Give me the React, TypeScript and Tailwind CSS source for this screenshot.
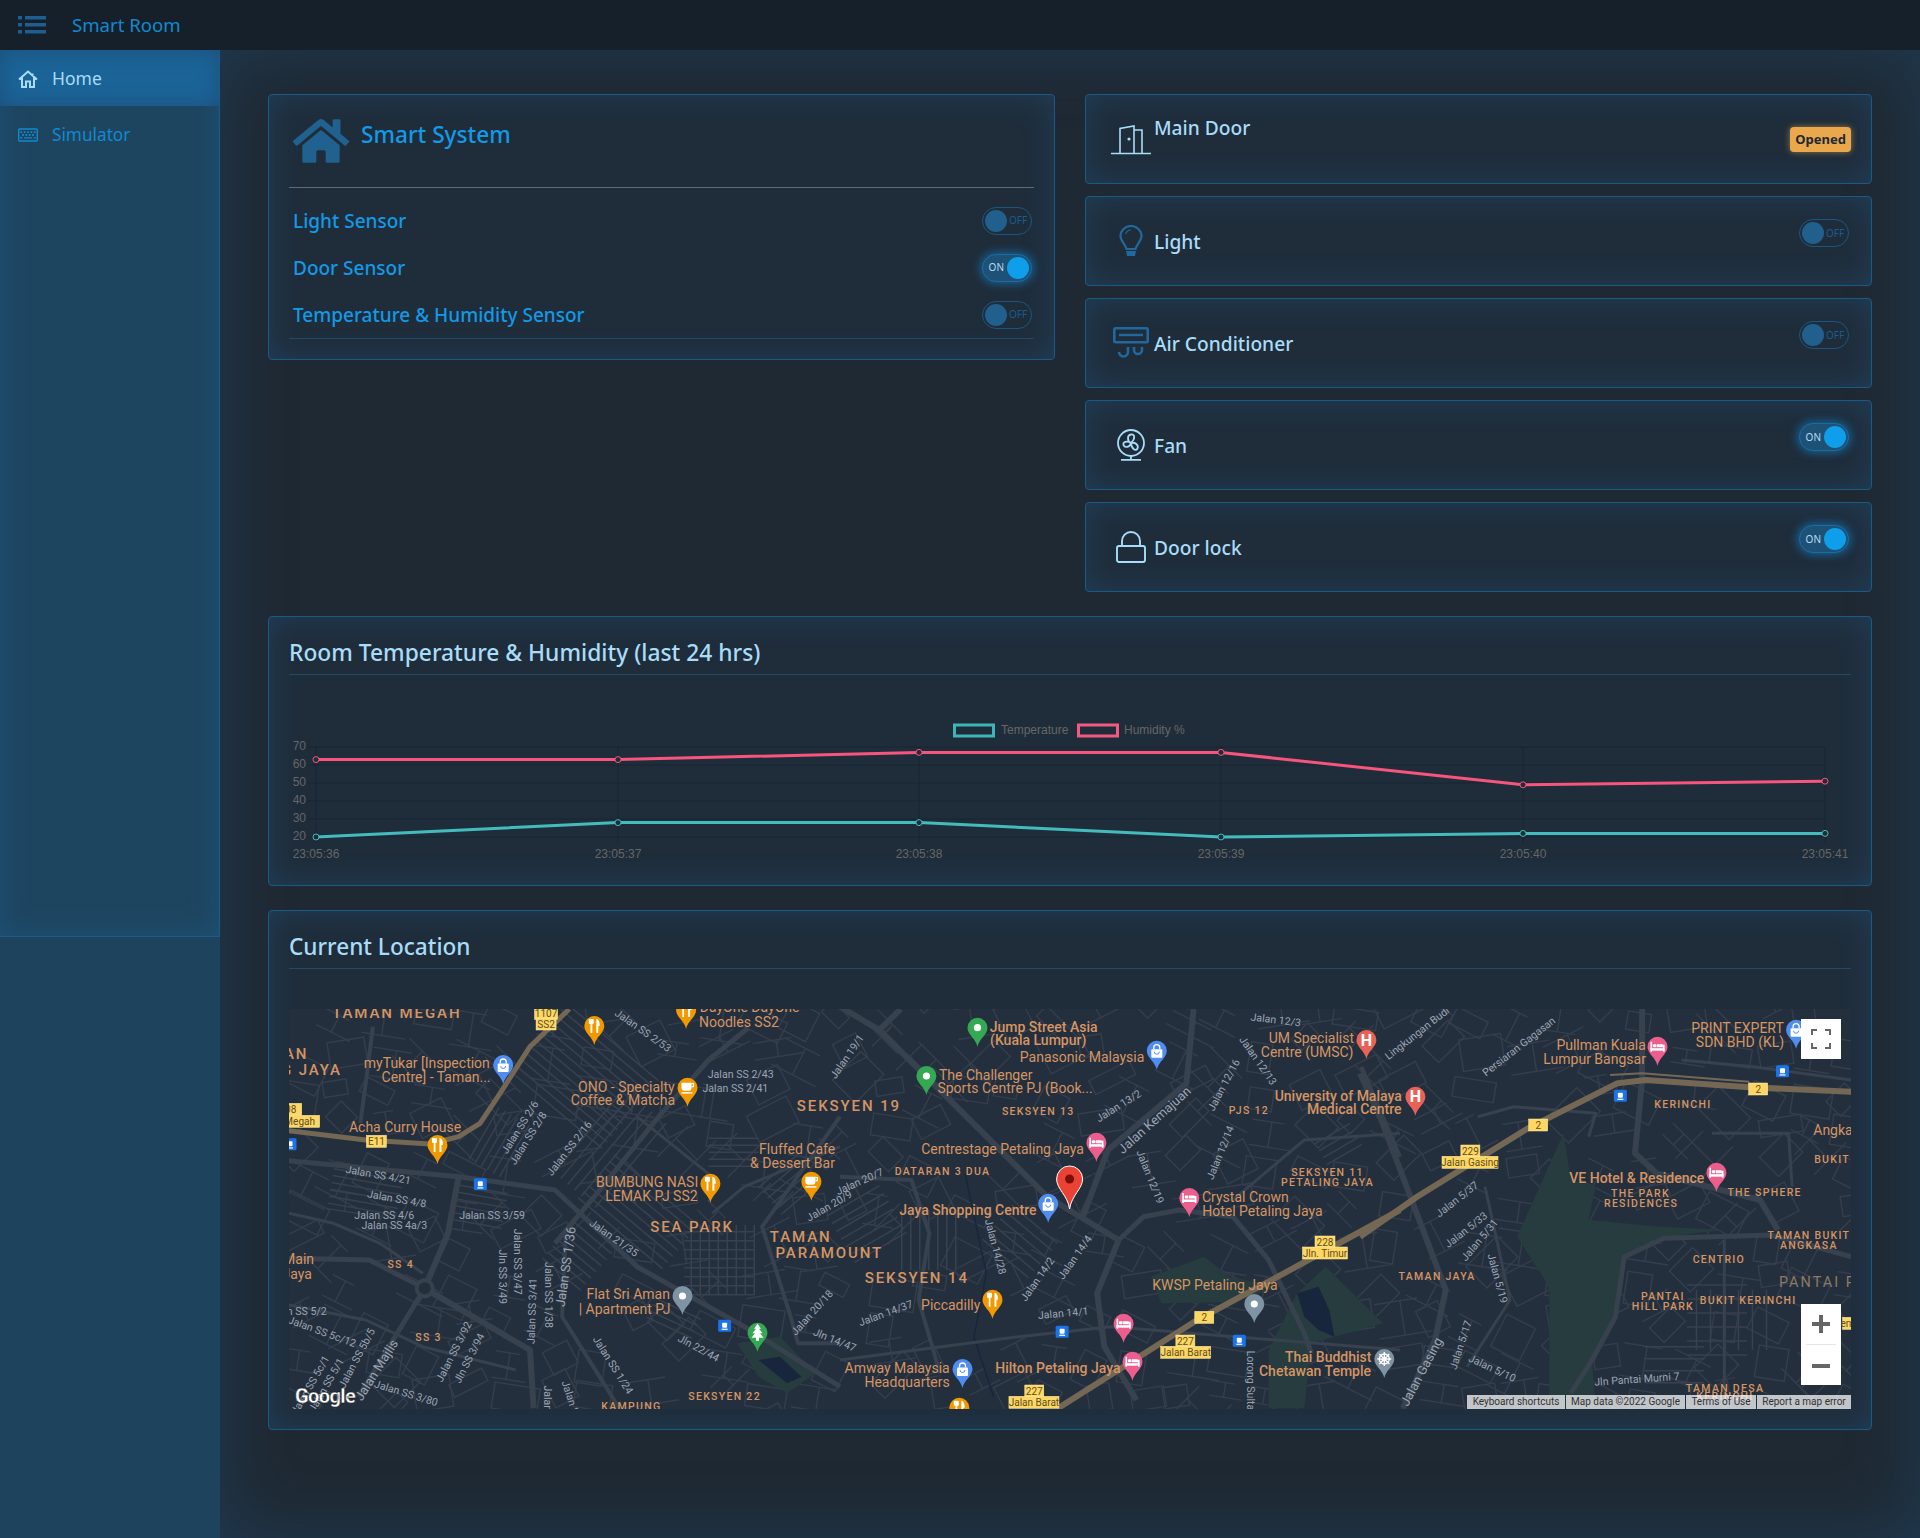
import React from 'react';
import { FaHome, FaRegKeyboard } from 'react-icons/fa';

const c6 = (x: number, y: number) => [x / 2.8 - 9, y / 3 - 9];
const c7 = (x: number, y: number) => [x / 2.8 + 551, y / 3 - 9];
const c8 = (x: number, y: number) => [x / 2.8 + 1071, y / 3 - 9];
type Crop = typeof c6;

const line = (crop: Crop, p: number[]) => {
  const out: string[] = [];
  for (let i = 0; i < p.length; i += 2) out.push(crop(p[i], p[i + 1]).map((n) => n.toFixed(1)).join(','));
  return out.join(' ');
};

// [crop, width, points]
const majorRoads: [Crop, number, number[]][] = [
  [c6, 5, [1310, 85, 1200, 180, 1060, 350, 880, 590, 770, 730]],
  [c6, 5, [0, 480, 500, 530, 770, 570, 1000, 800, 1300, 980, 1568, 1160]],
  [c6, 6, [500, 530, 470, 700, 405, 865, 700, 1050, 710, 1225]],
  [c6, 5, [25, 775, 250, 780, 405, 865, 220, 1190]],
  [c6, 4, [260, 80, 240, 250, 225, 370]],
  [c6, 4, [1568, 350, 1350, 680, 1430, 950, 1450, 1030, 1568, 1030]],
  [c6, 4, [800, 700, 790, 950, 950, 1225]],
  [c6, 3, [25, 640, 150, 670, 280, 730, 400, 820]],
  [c6, 3, [25, 915, 240, 960, 400, 1040, 660, 1110]],
  [c6, 3, [1568, 440, 1300, 560, 1210, 640]],
  [c6, 3, [1000, 350, 1210, 530]],
  [c7, 6, [0, 20, 110, 90, 580, 590, 780, 720]],
  [c7, 6, [110, 90, 170, 27]],
  [c7, 6, [990, 27, 970, 250, 750, 450, 680, 650]],
  [c7, 6, [780, 720, 720, 880, 740, 1040, 830, 1200]],
  [c7, 5, [780, 720, 850, 650, 950, 630, 1100, 650, 1200, 780, 1300, 1000, 1320, 1060]],
  [c7, 4, [0, 530, 200, 540, 250, 700, 220, 900, 280, 1120]],
  [c7, 3, [0, 1080, 500, 1010, 760, 980, 1568, 1050]],
  [c7, 3, [1568, 400, 1300, 420, 1100, 600]],
  [c7, 4, [1460, 200, 1568, 470]],
  [c8, 6, [0, 220, 60, 360, 240, 870, 210, 1020, 120, 1225]],
  [c8, 6, [790, 27, 790, 240, 770, 460, 830, 520, 1120, 600, 1170, 690]],
  [c8, 5, [1375, 770, 1150, 705, 850, 715, 740, 770, 715, 950, 650, 1080, 590, 1180]],
  [c8, 3, [1020, 720, 1020, 1225]],
  [c8, 3, [350, 560, 420, 900, 300, 1100]],
  [c8, 3, [985, 400, 1200, 400, 1210, 560]],
  [c8, 3, [900, 180, 1100, 200, 1375, 240]],
  [c8, 3, [330, 350, 430, 320, 660, 340, 640, 410]],
];

const hatches: [Crop, number, number, number, number, number, number][] = [
  [c6, 850, 230, 120, 90, 40, 8],
  [c6, 930, 450, 110, 60, -50, 9],
  [c6, 620, 430, 60, 40, -60, 7],
  [c6, 1000, 640, 110, 60, 40, 8],
  [c6, 240, 570, 70, 45, 10, 7],
  [c6, 560, 620, 50, 35, 10, 7],
  [c6, 1230, 780, 70, 70, 90, 9],
  [c6, 1230, 800, 70, 70, 0, 9],
  [c6, 830, 770, 50, 50, 40, 8],
  [c6, 1430, 560, 50, 40, -40, 7],
  [c6, 1100, 960, 50, 25, 25, 7],
  [c6, 1270, 460, 50, 30, 0, 7],
  [c7, 240, 720, 60, 60, 90, 9],
  [c7, 500, 730, 60, 50, 40, 9],
  [c7, 80, 680, 60, 60, -30, 9],
  [c7, 1400, 440, 40, 30, -30, 8],
  [c8, 1000, 960, 60, 70, 0, 14],
  [c8, 1040, 960, 60, 70, 90, 14],
  [c8, 880, 1100, 60, 40, 0, 12],
];

// [text, x, y, kind, rotation]
type L = [string, number, number, string, number?];
const labels6: L[] = [
  ['TAMAN MEGAH', 327, 40, 'b'], ['AN', 45, 162, 'b'], ['G JAYA', 88, 210, 'b'],
  ['myTukar [Inspection', 411, 190, 'p'], ['Centre] - Taman...', 437, 232, 'p'], ['Acha Curry House', 350, 380, 'p'],
  ['ONO - Specialty', 970, 260, 'p'], ['Coffee & Matcha', 960, 301, 'p'], ['DayOne DayOne', 1315, 22, 'p'], ['Noodles SS2', 1285, 67, 'p'],
  ['BUMBUNG NASI', 1028, 546, 'p'], ['LEMAK PJ SS2', 1040, 588, 'p'], ['Fluffed Cafe', 1448, 448, 'p'], ['& Dessert Bar', 1435, 490, 'p'],
  ['SEA PARK', 1154, 681, 'b'], ['Flat Sri Aman', 975, 883, 'p'], ['| Apartment PJ', 965, 926, 'p'], ['Main', 52, 778, 'p'], ['Jaya', 48, 822, 'p'],
  ['SS 4', 338, 792, 'a'], ['SS 3', 416, 1011, 'a'], ['SEKSYEN 22', 1245, 1188, 'a'], ['KAMPUNG', 984, 1218, 'a'],
  ['Jalan SS 2/53', 1016, 92, 'r', 35], ['Jalan SS 2/43', 1290, 224, 'r'], ['Jalan SS 2/41', 1275, 265, 'r'],
  ['Jalan SS 2/6', 672, 382, 'r', -58], ['Jalan SS 2/8', 695, 415, 'r', -58], ['Jalan SS 2/16', 810, 445, 'r', -52],
  ['Jalan SS 4/21', 275, 525, 'r', 10], ['Jalan SS 4/8', 327, 597, 'r', 10], ['Jalan SS 4/6', 292, 645, 'r'], ['Jalan SS 4a/3', 320, 677, 'r'],
  ['Jalan SS 3/59', 594, 646, 'r'], ['Jalan 21/35', 935, 714, 'r', 35], ['Jalan SS 3/47', 664, 785, 'r', 90], ['Jln SS 3/49', 622, 830, 'r', 90],
  ['Jalan SS 3/41', 706, 933, 'r', -88], ['Jalan SS 1/38', 752, 885, 'r', 90], ['Jalan SS 1/36', 800, 800, 'm', -82],
  ['Jalan 20/18', 1490, 938, 'r', -48], ['Jln 22/44', 1172, 1045, 'r', 28], ['n SS 5/2', 75, 934, 'r'], ['Jalan SS 5c/12', 118, 995, 'r', 20],
  ['Jalan SS 5b/5', 215, 1075, 'r', -62], ['Jalan SS 5c/1', 85, 1155, 'r', -60], ['Jalan SS 5/1', 130, 1155, 'r', -60], ['Jalan Majlis', 270, 1110, 'm', -58],
  ['Jalan SS 3/92', 487, 1055, 'r', -63], ['Jln SS 3/94', 530, 1075, 'r', -63], ['Jalan SS 3/80', 353, 1180, 'r', 17], ['Jalan SS 1/24', 932, 1095, 'r', 58],
  ['Jalan', 748, 1195, 'r', 90], ['Jalan Ss', 815, 1200, 'r', 72],
];
const labels7: L[] = [
  ['SEKSYEN 19', 25, 318, 'b'], ['TAMAN', -110, 711, 'b'], ['PARAMOUNT', -30, 759, 'b'], ['SEKSYEN 14', 215, 834, 'b'],
  ['Jump Street Asia', 570, 80, 'q'], ['(Kuala Lumpur)', 555, 121, 'q'], ['Panasonic Malaysia', 678, 170, 'p'], ['The Challenger', 408, 224, 'p'], ['Sports Centre PJ (Book...', 490, 265, 'p'],
  ['SEKSYEN 13', 555, 333, 'a'], ['Jalan 13/2', 780, 318, 'r', -32], ['Jalan Kemajuan', 880, 360, 'm', -42], ['Jalan 12/3', 1220, 60, 'r', 7],
  ['Jalan 12/16', 1075, 255, 'r', -62], ['Jalan 12/13', 1170, 182, 'r', 55], ['Jalan 12/14', 1065, 458, 'r', -68], ['Jalan 12/19', 868, 530, 'r', 68],
  ['UM Specialist', 1320, 115, 'p'], ['Centre (UMSC)', 1308, 157, 'p'], ['University of Malaya', 1395, 287, 'q'], ['Medical Centre', 1440, 328, 'q'], ['PJS 12', 1145, 330, 'a'],
  ['Centrestage Petaling Jaya', 455, 446, 'p'], ['DATARAN 3 DUA', 287, 514, 'a'], ['Jaya Shopping Centre', 358, 629, 'q'], ['Jalan 14/28', 435, 740, 'r', 75],
  ['Jalan 14/2', 553, 838, 'r', -55], ['Jalan 14/4', 658, 772, 'r', -55], ['Jalan 14/37', 128, 940, 'r', -20], ['Jalan 14/1', 625, 940, 'r', -5], ['Piccadilly', 310, 916, 'p'],
  ['Crystal Crown', 1135, 590, 'p'], ['Hotel Petaling Jaya', 1183, 632, 'p'], ['SEKSYEN 11', 1365, 516, 'a'], ['PETALING JAYA', 1365, 546, 'a'], ['KWSP Petaling Jaya', 1050, 856, 'p'],
  ['Amway Malaysia', 160, 1103, 'p'], ['Headquarters', 188, 1145, 'p'], ['Hilton Petaling Jaya', 610, 1103, 'q'], ['Thai Buddhist', 1367, 1072, 'q'], ['Chetawan Temple', 1330, 1114, 'q'],
  ['Lorong Sultan', 1150, 1150, 'r', 90], ['Jalan 20/7', 55, 545, 'r', -24], ['Jalan 20/9', -30, 618, 'r', -30], ['Jalan 19/1', 20, 170, 'r', -55], ['Jln 14/47', -15, 1020, 'r', 22],
];
const labels8: L[] = [
  ['Lingkungan Budi', 160, 100, 'r', -38], ['Persiaran Gagasan', 445, 140, 'r', -38], ['Pullman Kuala', 675, 136, 'p'], ['Lumpur Bangsar', 657, 178, 'p'],
  ['PRINT EXPERT', 1057, 85, 'p'], ['SDN BHD (KL)', 1064, 127, 'p'], ['KERINCHI', 904, 312, 'a'], ['Angkasa', 1345, 391, 'p'], ['BUKIT', 1322, 477, 'a'],
  ['VE Hotel & Residence', 775, 535, 'q'], ['THE PARK', 785, 579, 'a'], ['RESIDENCES', 787, 609, 'a'], ['THE SPHERE', 1133, 576, 'a'], ['TAMAN BUKIT', 1257, 705, 'a'], ['ANGKASA', 1257, 735, 'a'],
  ['CENTRIO', 1005, 777, 'a'], ['PANTAI', 848, 888, 'a'], ['HILL PARK', 848, 918, 'a'], ['BUKIT KERINCHI', 1087, 900, 'a'], ['TAMAN JAYA', 216, 828, 'a'],
  ['Jalan 5/37', 272, 598, 'r', -38], ['Jalan 5/33', 297, 690, 'r', -38], ['Jalan 5/31', 335, 720, 'r', -50], ['Jalan 5/19', 385, 835, 'r', 75], ['Jalan 5/17', 282, 1035, 'r', -72],
  ['Jalan 5/10', 370, 1105, 'r', 25], ['Jalan Gasing', 172, 1115, 'm', -62], ['Jln Pantai Murni 7', 775, 1138, 'r', -4], ['TAMAN DESA', 1022, 1164, 'a'], ['KERINCHI', 1022, 1190, 'a'], ['PANTAI P', 1282, 847, 'd'],
];

const labelStyle: Record<string, { size: number; fill: string; ls?: number; weight?: number }> = {
  p: { size: 14, fill: '#d59563' },
  q: { size: 14, fill: '#d59563', weight: 500 },
  a: { size: 10.5, fill: '#d59563', ls: 1.3, weight: 500 },
  b: { size: 15, fill: '#d59563', ls: 1.9, weight: 500 },
  d: { size: 14.5, fill: '#8f7a62', ls: 2, weight: 400 },
  r: { size: 10.6, fill: '#9ca5b3' },
  m: { size: 13, fill: '#9ca5b3' },
};

// [glyph, color, x, y] y is the tip of the pin
const pins: [Crop, string, string, number, number][] = [
  [c6, 'bag', '#4f8ef0', 625, 252], [c6, 'food', '#f29900', 880, 135], [c6, 'food', '#f29900', 1137, 87], [c6, 'cup', '#f29900', 1141, 320],
  [c6, 'food', '#f29900', 441, 492], [c6, 'food', '#f29900', 1205, 608], [c6, 'cup', '#f29900', 1488, 602], [c6, 'dot', '#7e93a3', 1127, 945], [c6, 'tree', '#34a853', 1337, 1055],
  [c7, 'dot', '#34a853', 385, 140], [c7, 'dot', '#34a853', 242, 285], [c7, 'bag', '#4f8ef0', 887, 209], [c7, 'h', '#ea6158', 1474, 177], [c7, 'bed', '#ec5f8c', 718, 485],
  [c7, 'bed', '#ec5f8c', 978, 651], [c7, 'bag', '#4f8ef0', 583, 668], [c7, 'food', '#f29900', 427, 956], [c7, 'bed', '#ec5f8c', 794, 1028], [c7, 'bed', '#ec5f8c', 819, 1142],
  [c7, 'dot', '#7e93a3', 1160, 969], [c7, 'wheel', '#7e93a3', 1524, 1134], [c7, 'bag', '#4f8ef0', 343, 1164], [c7, 'food', '#f29900', 334, 1280],
  [c8, 'h', '#ea6158', 155, 347], [c8, 'bed', '#ec5f8c', 833, 197], [c8, 'bag', '#4f8ef0', 1221, 146], [c8, 'bed', '#ec5f8c', 998, 575],
];

const transit: [Crop, number, number][] = [
  [c6, 28, 433], [c6, 561, 553], [c6, 1245, 977], [c7, 622, 995], [c7, 1118, 1022], [c8, 729, 287], [c8, 1183, 214],
];

// [text, x, y, width]
const shields: [Crop, string, number, number, number][] = [
  [c6, '1107', 745, 40, 23], [c6, 'SS2', 745, 72, 20], [c6, 'E11', 270, 424, 20], [c6, '08', 30, 328, 22], [c6, 'Megah', 55, 364, 40],
  [c7, '228', 1358, 726, 20], [c7, 'Jln. Timur', 1358, 759, 45], [c7, '2', 1020, 952, 19], [c7, '227', 967, 1023, 19], [c7, 'Jalan Barat', 968, 1057, 50],
  [c7, '227', 544, 1173, 19], [c7, 'Jalan Barat', 543, 1207, 50], [c8, '229', 309, 453, 19], [c8, 'Jalan Gasing', 308, 487, 56], [c8, '2', 499, 375, 19], [c8, '2', 1115, 267, 19], [c8, 'em', 1365, 970, 10],
];

function Glyph({ kind }: { kind: string }) {
  if (kind === 'dot') return <circle cx="0" cy="-19" r="3.6" fill="#fff" />;
  if (kind === 'h')
    return (
      <text x="0" y="-13.5" textAnchor="middle" fontSize="16" fontWeight="700" fill="#fff">
        H
      </text>
    );
  if (kind === 'bag')
    return (
      <g>
        <rect x="-5.5" y="-20.5" width="11" height="8.5" rx="1" fill="#fff" />
        <path d="M-3 -20.5 v-1.5 a3 3 0 0 1 6 0 v1.5" fill="none" stroke="#fff" strokeWidth="1.3" />
        <path d="M-2.5 -18 a2.5 2.5 0 0 0 5 0" fill="none" stroke="#4f8ef0" strokeWidth="1" />
      </g>
    );
  if (kind === 'food')
    return (
      <g fill="#fff">
        <rect x="-5.5" y="-26" width="5" height="5" rx="1" />
        <rect x="-3.8" y="-22" width="1.8" height="10" />
        <path d="M2 -26 c3 0 3.4 4 3.4 7 h-1.4 v7 h-2z" />
      </g>
    );
  if (kind === 'cup')
    return (
      <g>
        <path d="M-6 -24 h10 v5 a3 3 0 0 1 -3 3 h-4 a3 3 0 0 1 -3 -3z" fill="#fff" />
        <path d="M4 -23 h2 v3 h-2" fill="none" stroke="#fff" strokeWidth="1.2" />
        <rect x="-6" y="-14.5" width="11" height="1.4" fill="#fff" />
      </g>
    );
  if (kind === 'bed')
    return (
      <g fill="#fff">
        <rect x="-7" y="-24" width="1.6" height="10" />
        <rect x="5.5" y="-21" width="1.6" height="7" />
        <rect x="-7" y="-17.5" width="14" height="2.5" />
        <rect x="-4.6" y="-21.5" width="3.6" height="3" rx="1" />
        <path d="M-.5 -21.5 h5 a1.5 1.5 0 0 1 1.5 1.5 v1.5 h-6.5z" />
      </g>
    );
  if (kind === 'tree') return <path d="M0 -28 l3.5 5 h-2 l3.5 4.5 h-2.5 l3.5 4.5 h-4.5 v3 h-3 v-3 h-4.5 l3.5 -4.5 h-2.5 l3.5 -4.5 h-2z" fill="#fff" />;
  if (kind === 'wheel')
    return (
      <g fill="none" stroke="#fff" strokeWidth="1.3">
        <circle cx="0" cy="-19" r="5" />
        <circle cx="0" cy="-19" r="1.5" fill="#fff" />
        <path d="M0 -26 v14 M-7 -19 h14 M-5 -24 l10 10 M5 -24 l-10 10" />
      </g>
    );
  return null;
}

// irregular blocks of minor streets, seeded so each run draws the same map
function minorStreets() {
  let seed = 7;
  const rnd = () => {
    seed = (seed * 16807) % 2147483647;
    return seed / 2147483647;
  };
  const out: React.ReactNode[] = [];
  for (let y = -10; y < 410; y += 38) {
    for (let x = -10; x < 1580; x += 42) {
      if (rnd() < 0.12) continue;
      const w = 20 + rnd() * 26;
      const h = 14 + rnd() * 22;
      const rot = Math.round(rnd() * 5) * 18 - 45;
      const d = rnd() < 0.5 ? `M0 0 H${w} V${h} H0 Z` : `M0 0 H${w} M${w * 0.6} 0 V${h} M0 ${h} H${w + 10}`;
      out.push(<path key={x + '-' + y} d={d} transform={`translate(${x + rnd() * 12} ${y + rnd() * 12}) rotate(${rot})`} fill="none" stroke="#343e4c" strokeWidth="1.4" />);
    }
  }
  return out;
}

function MapView() {
  return (
    <svg viewBox="0 0 1562 400" className="block w-full h-full font-['Roboto',sans-serif]">
      <rect width="1562" height="400" fill="#242f3e" />
      <g>{minorStreets()}</g>
      {hatches.map(([crop, x, y, w, h, rot, step], i) => {
        const [cx, cy] = crop(x, y);
        const rows = [];
        for (let n = -h / 2; n <= h / 2; n += step) rows.push(<line key={n} x1={-w / 2} x2={w / 2} y1={n} y2={n} />);
        return (
          <g key={i} transform={`translate(${cx} ${cy}) rotate(${rot})`} stroke="#38414e" strokeWidth="1.5">
            {rows}
          </g>
        );
      })}
      <polygon points={line(c8, [570, 400, 440, 710, 530, 860, 530, 1225, 660, 1225, 650, 1080, 715, 950, 740, 770, 860, 710, 1020, 690, 840, 680, 640, 660, 660, 560, 590, 540])} fill="#263c3f" />
      <polygon points={line(c7, [870, 830, 1020, 770, 1090, 830, 1230, 860, 1100, 905, 900, 910])} fill="#263c3f" />
      <polygon points={line(c7, [1280, 880, 1360, 800, 1520, 970, 1320, 1030, 1300, 1225, 1200, 1225, 1200, 1050])} fill="#263c3f" />
      <polygon points={line(c7, [1280, 880, 1340, 860, 1370, 930, 1385, 1010, 1340, 990, 1300, 950])} fill="#17263c" />
      <polygon points={line(c6, [1280, 1030, 1400, 1010, 1500, 1120, 1420, 1180, 1340, 1130])} fill="#263c3f" />
      <polygon points={line(c6, [1340, 1080, 1400, 1070, 1460, 1130, 1420, 1150])} fill="#17263c" />
      <polyline points={line(c7, [350, 520, 410, 820, 375, 1010, 430, 1190])} fill="none" stroke="#17263c" strokeWidth="1.5" />
      {majorRoads.map(([crop, w, p], i) => (
        <polyline key={i} points={line(crop, p)} fill="none" stroke="#38414e" strokeWidth={w} strokeLinejoin="round" />
      ))}
      <circle cx={c6(405, 865)[0]} cy={c6(405, 865)[1]} r="10" fill="#38414e" />
      <circle cx={c6(405, 865)[0]} cy={c6(405, 865)[1]} r="6" fill="#242f3e" />
      <polyline points={line(c6, [25, 392, 240, 420, 420, 432, 500, 410, 560, 370, 610, 290, 700, 140, 810, 27])} fill="none" stroke="#746855" strokeWidth="5" />
      <polyline points={line(c7, [610, 1225, 1000, 960, 1200, 845, 1568, 630])} fill="none" stroke="#746855" strokeWidth="6" />
      <polyline points={line(c8, [0, 710, 160, 590, 470, 385, 720, 250, 800, 240, 1090, 262, 1375, 275])} fill="none" stroke="#746855" strokeWidth="6" />
      <polyline points={line(c8, [700, 225, 790, 220, 1090, 245])} fill="none" stroke="#746855" strokeWidth="2" />
      {shields.map(([crop, text, x, y, w], i) => {
        const [cx, cy] = crop(x, y);
        return (
          <g key={i}>
            <rect x={cx - w / 2} y={cy - 6} width={w} height="12" fill="#fdd663" stroke="#fff3b0" strokeWidth="0.5" />
            <text x={cx} y={cy + 3.5} textAnchor="middle" fontSize="10" fill="#5f4f1e">
              {text}
            </text>
          </g>
        );
      })}
      {[[c6, labels6], [c7, labels7], [c8, labels8]].map(([crop, list], g) =>
        (list as L[]).map(([text, x, y, kind, rot], i) => {
          const [cx, cy] = (crop as Crop)(x, y);
          const s = labelStyle[kind];
          return (
            <text
              key={g + '-' + i}
              transform={`translate(${cx.toFixed(1)} ${cy.toFixed(1)}) rotate(${rot ?? 0})`}
              textAnchor="middle"
              dominantBaseline="central"
              fontSize={s.size}
              letterSpacing={s.ls}
              fontWeight={s.weight}
              fill={s.fill}
            >
              {text}
            </text>
          );
        }),
      )}
      {transit.map(([crop, x, y], i) => {
        const [cx, cy] = crop(x, y);
        return (
          <g key={i} transform={`translate(${cx} ${cy})`}>
            <rect x="-6.5" y="-6" width="13" height="12" rx="1.5" fill="#1a73e8" />
            <rect x="-2.5" y="-3" width="5" height="5" rx="0.8" fill="#fff" />
            <rect x="-3" y="3" width="6" height="1.2" fill="#fff" />
          </g>
        );
      })}
      {pins.map(([crop, glyph, color, x, y], i) => {
        const [cx, cy] = crop(x, y);
        return (
          <g key={i} transform={`translate(${cx.toFixed(1)} ${cy.toFixed(1)})`}>
            <path d="M0 0 C-1.5 -8 -10 -12 -10 -19 A10 10 0 1 1 10 -19 C10 -12 1.5 -8 0 0Z" fill={color} />
            <Glyph kind={glyph} />
          </g>
        );
      })}
      <g transform={`translate(${c7(643, 627).map((n) => n.toFixed(1)).join(' ')})`}>
        <path d="M0 0 C-2 -14 -13 -20 -13 -30 A13 13 0 1 1 13 -30 C13 -20 2 -14 0 0Z" fill="#ea4335" stroke="#fff" strokeWidth="1" />
        <circle cx="0" cy="-30" r="4.5" fill="#7a0f0a" />
      </g>
      <text x="6" y="394" fontSize="20" fontWeight="700" fill="#fff" stroke="#000" strokeWidth="0.3" letterSpacing="-0.6">
        Google
      </text>
    </svg>
  );
}

function Toggle({ on }: { on?: boolean }) {
  return on ? (
    <div className="flex items-center justify-end w-[50px] h-[28px] rounded-full border-[1.5px] border-[#1b6ba5] bg-[#1e5176] pr-[2px] shadow-[0_0_9px_2px_rgba(14,140,220,0.55)]">
      <span className="mr-[3px] text-[10px] text-[#b5dcf3] font-['Noto_Sans',sans-serif]">ON</span>
      <span className="w-[22px] h-[22px] rounded-full bg-[#0f9eea]" />
    </div>
  ) : (
    <div className="flex items-center w-[50px] h-[28px] rounded-full border-[1.5px] border-[#1c5580] pl-[2px]">
      <span className="w-[22px] h-[22px] rounded-full bg-[#215f8d]" />
      <span className="ml-[2px] text-[10px] text-[#1c5b8c] font-['Noto_Sans',sans-serif]">OFF</span>
    </div>
  );
}

function Card({ className, children }: { className?: string; children: React.ReactNode }) {
  return (
    <div className={`rounded-[4px] border border-[#1b5a85] bg-[#1f2d3b] shadow-[inset_0_0_30px_rgba(34,100,150,0.32)] ${className ?? ''}`}>
      {children}
    </div>
  );
}

function DoorIcon() {
  return (
    <svg width="40" height="32" viewBox="0 0 40 32" fill="none" stroke="#a8dcf8" strokeWidth="1.6">
      <path d="M0 30.5 h40 M9 30.5 V5.5 L23 3 V30.5 M23 7 h8 v23.5" />
      <circle cx="18" cy="16" r="1.6" fill="#a8dcf8" stroke="none" />
    </svg>
  );
}
function BulbIcon() {
  return (
    <svg width="24" height="32" viewBox="0 0 24 32" fill="none" stroke="#21689c" strokeWidth="2.2">
      <path d="M7.5 24 C6.5 19 1.5 16 1.5 11 A10.5 10 0 0 1 22.5 11 C22.5 16 17.5 19 16.5 24z" />
      <path d="M6.5 9 A6 6 0 0 1 12 5" strokeWidth="1.2" />
      <path d="M7 26 h10 l-1 5 h-8z" fill="#21689c" stroke="none" />
    </svg>
  );
}
function AcIcon() {
  return (
    <svg width="36" height="32" viewBox="0 0 36 32" fill="none" stroke="#21689c" strokeWidth="2.6">
      <rect x="1.3" y="1.3" width="33.4" height="14" rx="1.2" />
      <path d="M6 8 h24" strokeWidth="2.4" />
      <path d="M15 20 v5 a4.5 4.5 0 1 1 -9 0 M21 20 v3 a4 4 0 0 0 8 0 v-3" />
    </svg>
  );
}
function FanIcon() {
  return (
    <svg width="30" height="32" viewBox="0 0 30 32" fill="none" stroke="#a8dcf8" strokeWidth="1.8">
      <circle cx="15" cy="14" r="13" />
      <path d="M15 14 c-4 -2 -4 -8 0 -8.5 c4 -.5 4.5 4 0 8.5z M15 14 c4 -1 8 2 6.5 5.5 c-1.500 3 -6 1 -6.5 -5.500z M15 14 c-1 4.500 -6.500 5 -7.500 2 c-1 -3 3.500 -4.500 7.500 -2z" />
      <path d="M15 27 v3.500 M5 30.800 h20" />
    </svg>
  );
}
function LockIcon() {
  return (
    <svg width="30" height="32" viewBox="0 0 30 32" fill="none" stroke="#a8dcf8" strokeWidth="1.9">
      <rect x="1" y="15" width="28" height="16" rx="2" />
      <path d="M6 15 V10 a9 9 0 0 1 18 0 V15" />
    </svg>
  );
}

const devices = [
  { name: 'Light', icon: <BulbIcon />, on: false },
  { name: 'Air Conditioner', icon: <AcIcon />, on: false },
  { name: 'Fan', icon: <FanIcon />, on: true },
  { name: 'Door lock', icon: <LockIcon />, on: true },
];
const sensors = [
  { name: 'Light Sensor', on: false },
  { name: 'Door Sensor', on: true },
  { name: 'Temperature & Humidity Sensor', on: false },
];

const xs = [27, 329, 630, 932, 1234, 1536];
const yFor = (v: number) => 137 - (v - 20) * 1.8;
const temp = [20, 28, 28, 20, 22, 22];
const humid = [63, 63, 67, 67, 49, 51];
const times = ['23:05:36', '23:05:37', '23:05:38', '23:05:39', '23:05:40', '23:05:41'];

function Chart() {
  return (
    <svg viewBox="0 0 1562 170" className="block w-full h-[170px] font-['Liberation_Sans',sans-serif]">
      <rect x="665.500" y="25" width="39" height="11" fill="none" stroke="#3fb5b5" strokeWidth="3" />
      <text x="712" y="34" fontSize="12" fill="#666">Temperature</text>
      <rect x="789.500" y="25" width="39" height="11" fill="none" stroke="#f25a80" strokeWidth="3" />
      <text x="835" y="34" fontSize="12" fill="#666">Humidity %</text>
      {[70, 60, 50, 40, 30, 20].map((v) => (
        <g key={v}>
          <line x1="18" x2="1536" y1={yFor(v)} y2={yFor(v)} stroke="#182430" />
          <text x="17" y={yFor(v) + 3} fontSize="12" fill="#666" textAnchor="end">{v}</text>
        </g>
      ))}
      {xs.map((x, i) => (
        <g key={x}>
          <line x1={x} x2={x} y1="47" y2="143" stroke="#182430" />
          <text x={x} y="158" fontSize="12" fill="#666" textAnchor="middle">{times[i]}</text>
        </g>
      ))}
      {[
        { data: temp, color: '#45bcbc' },
        { data: humid, color: '#f7557d' },
      ].map(({ data, color }) => (
        <g key={color}>
          <polyline points={data.map((v, i) => `${xs[i]},${yFor(v)}`).join(' ')} fill="none" stroke={color} strokeWidth="3" />
          {data.map((v, i) => (
            <circle key={i} cx={xs[i]} cy={yFor(v)} r="3" fill="#1f2d3b" stroke={color} />
          ))}
        </g>
      ))}
    </svg>
  );
}

export default function App() {
  return (
    <div className="min-h-[1538px] bg-[#1d435d] font-['Noto_Sans',sans-serif]">
      <header className="flex items-center h-[50px] pl-[18px] bg-[#16202a] shadow-[0_1px_4px_rgba(0,0,0,0.4)]">
        <svg width="28" height="18" viewBox="0 0 28 18" fill="#1d5f91">
          <rect y="0" width="4" height="3.500" />
          <rect y="7" width="4" height="3.500" />
          <rect y="14" width="4" height="3.500" />
          <rect x="7" y="0" width="21" height="3.500" />
          <rect x="7" y="7" width="21" height="3.500" />
          <rect x="7" y="14" width="21" height="3.500" />
        </svg>
        <span className="ml-[26px] text-[18.6px] text-[#1289cf]">Smart Room</span>
      </header>
      <div className="flex min-h-[1488px]">
        <aside className="w-[220px] h-[887px] shrink-0 bg-[#1e4560] border-r border-b border-[#1e5c88] shadow-[inset_0_0_30px_rgba(30,110,170,0.3)]">
          <div className="flex items-center h-[56px] pl-[18px] pt-[1px] bg-[#1b6498] shadow-[inset_0_0_20px_rgba(30,60,90,0.5)] text-[#a8dcf8]">
            <svg width="20" height="18" viewBox="0 0 20 18" fill="none" stroke="#a8dcf8" strokeWidth="2">
              <path d="M1 9.500 L10 1.500 L19 9.500 M4 7.500 V17 H8 V11.500 H12 V17 H16 V7.500 M14.500 3.500 V6" />
            </svg>
            <span className="ml-[14px] text-[17.5px]">Home</span>
          </div>
          <div className="flex items-center h-[56px] pl-[18px] pt-[1px] text-[#1289cf]">
            <FaRegKeyboard className="w-[20px] h-[20px]" />
            <span className="ml-[14px] text-[17.2px]">Simulator</span>
          </div>
        </aside>
        <main className="flex-1 bg-[#1f2933] px-[48px] pt-[44px] shadow-[inset_0_0_70px_rgba(30,80,120,0.45)]">
          <div className="grid grid-cols-2 gap-x-[30px] mb-[24px]">
            <div>
              <Card className="h-[266px] px-[20px]">
                <div className="flex items-center h-[93px] border-b border-[#5f6b76] pl-[4px]">
                  <FaHome className="w-[56px] h-[50px] text-[#21618f]" />
                  <span className="ml-[12px] -mt-[12px] text-[22.7px] font-medium text-[#1399e6]">Smart System</span>
                </div>
                <div className="pt-[9px]">
                  {sensors.map((s, i) => (
                    <div key={s.name} className={`flex items-center justify-between pl-[4px] pr-[2px] ${i === 2 ? 'h-[48px] border-b border-[#1f4a69]' : 'h-[47px]'}`}>
                      <span className="mt-[2px] text-[19px] font-medium text-[#1399e6]">{s.name}</span>
                      <Toggle on={s.on} />
                    </div>
                  ))}
                </div>
              </Card>
            </div>
            <div className="flex flex-col gap-[12px]">
              <Card className="flex items-center justify-between h-[90px] pl-[25px] pr-[20px]">
                <div className="flex items-start">
                  <DoorIcon />
                  <span className="ml-[3px] -mt-[9px] text-[19.2px] font-medium text-[#a8dcf8]">Main Door</span>
                </div>
                <span className="mt-[1px] rounded-[4px] bg-[#e9a84c] px-[5px] py-[3px] text-[13px] font-bold text-[#1f2933] shadow-[0_0_6px_rgba(233,168,76,0.6)]">
                  Opened
                </span>
              </Card>
              {devices.map((d) => (
                <Card key={d.name} className="flex justify-between h-[90px] pl-[25px] pr-[22px]">
                  <div className="flex items-center">
                    <div className="flex justify-center w-[40px]">{d.icon}</div>
                    <span className="ml-[3px] mt-[2px] text-[19.2px] font-medium text-[#a8dcf8]">{d.name}</span>
                  </div>
                  <div className="pt-[22px]">
                    <Toggle on={d.on} />
                  </div>
                </Card>
              ))}
            </div>
          </div>
          <Card className="h-[270px] px-[20px] mb-[24px]">
            <div className="flex items-center h-[58px] pt-[16px] border-b border-[#1f4a69] text-[22.8px] font-medium text-[#a8dcf8]">
              Room Temperature &amp; Humidity (last 24 hrs)
            </div>
            <div className="pt-[25px]">
              <Chart />
            </div>
          </Card>
          <Card className="h-[520px] px-[20px]">
            <div className="flex items-center h-[58px] pt-[14px] border-b border-[#1f4a69] text-[22.6px] font-medium text-[#a8dcf8]">Current Location</div>
            <div className="relative mt-[40px] h-[400px] overflow-hidden">
              <MapView />
              <div className="absolute top-[10px] right-[10px] flex items-center justify-center w-[40px] h-[40px] bg-white">
                <svg width="20" height="20" viewBox="0 0 20 20" fill="none" stroke="#666" strokeWidth="2">
                  <path d="M1 6 V1 H6 M14 1 H19 V6 M19 14 V19 H14 M6 19 H1 V14" />
                </svg>
              </div>
              <div className="absolute top-[295px] right-[10px] flex flex-col items-center w-[40px] h-[81px] bg-white">
                <svg width="18" height="18" viewBox="0 0 18 18" fill="#666" className="mt-[11px]">
                  <rect x="0" y="7" width="18" height="4" />
                  <rect x="7" y="0" width="4" height="18" />
                </svg>
                <div className="w-[30px] h-px mt-[11px] bg-[#e6e6e6]" />
                <svg width="18" height="4" viewBox="0 0 18 4" fill="#666" className="mt-[19px]">
                  <rect width="18" height="4" />
                </svg>
              </div>
              <div className="absolute bottom-0 right-0 flex h-[14px] gap-[1px] text-[10px] leading-[14px] text-[#333] font-['Roboto',sans-serif]">
                <span className="w-[98px] text-center bg-[#ffffffb8]">Keyboard shortcuts</span>
                <span className="w-[119px] text-center bg-[#ffffffb8]">Map data ©2022 Google</span>
                <span className="w-[70px] text-center bg-[#ffffffb8]">Terms of Use</span>
                <span className="w-[94px] text-center bg-[#ffffffb8]">Report a map error</span>
              </div>
            </div>
          </Card>
        </main>
      </div>
    </div>
  );
}
